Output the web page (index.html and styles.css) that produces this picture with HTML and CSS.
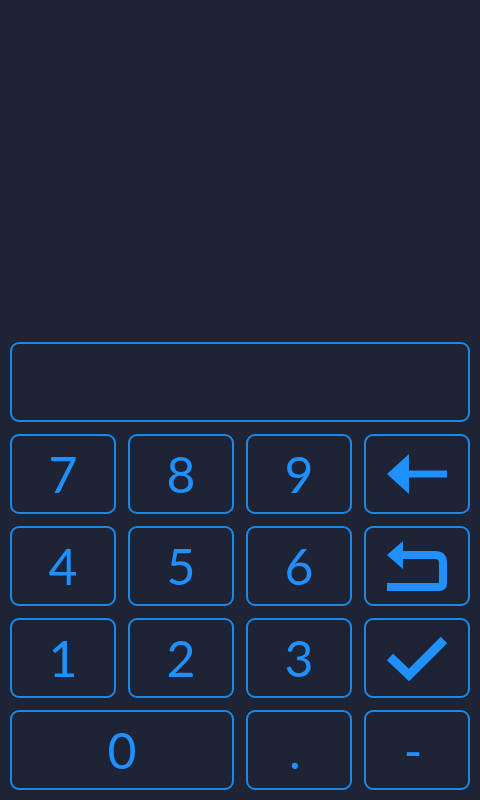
FILE: index.html
```html
<!DOCTYPE html>
<html>
<head>
<meta charset="utf-8">
<link rel="stylesheet" href="styles.css">
</head>
<body>
<div class="app">
  <div class="spacer"></div>
  <div class="pad">
    <div class="display"></div>
    <div class="keys">
      <div class="key">7</div>
      <div class="key">8</div>
      <div class="key">9</div>
      <div class="key icon">
        <svg width="60" height="40" viewBox="0 0 60 40"><polygon points="0,20 22,0 22,16.5 60,16.5 60,23.5 22,23.5 22,40" fill="#1e90ff"/></svg>
      </div>
      <div class="key">4</div>
      <div class="key">5</div>
      <div class="key">6</div>
      <div class="key icon">
        <svg width="60" height="50" viewBox="0 0 60 50"><polygon points="0,14 16,0 16,28" fill="#1e90ff"/><path d="M14 14 H48 Q56 14 56 22 V42 Q56 46 52 46 H0" fill="none" stroke="#1e90ff" stroke-width="8"/></svg>
      </div>
      <div class="key">1</div>
      <div class="key">2</div>
      <div class="key">3</div>
      <div class="key icon">
        <svg width="64" height="50" viewBox="0 0 64 50"><polyline points="5,24 24,42 59,7" fill="none" stroke="#1e90ff" stroke-width="9"/></svg>
      </div>
      <div class="key wide">0</div>
      <div class="key sym">.</div>
      <div class="key sym">-</div>
    </div>
  </div>
</div>
</body>
</html>
```
FILE: styles.css
```css
html, body {
  margin: 0;
  padding: 0;
  background: #1f2336;
  height: 100%;
}
.app {
  display: flex;
  flex-direction: column;
  height: 800px;
}
.spacer {
  flex: 1;
}
.pad {
  padding: 0 10px 10px 10px;
  display: flex;
  flex-direction: column;
  gap: 12px;
}
.display {
  height: 80px;
  box-sizing: border-box;
  border: 2px solid #1a8ae6;
  border-radius: 9px;
}
.keys {
  display: grid;
  grid-template-columns: repeat(4, 106px);
  grid-auto-rows: 80px;
  column-gap: 12px;
  row-gap: 12px;
}
.key {
  box-sizing: border-box;
  border: 2px solid #1a8ae6;
  border-radius: 9px;
  display: flex;
  align-items: center;
  justify-content: center;
  color: #1e90ff;
  font-family: "Lato", sans-serif;
  font-size: 50px;
  line-height: 1;
}
.key.wide {
  grid-column: span 2;
}
.key.sym {
  padding-right: 8px;
}
```
